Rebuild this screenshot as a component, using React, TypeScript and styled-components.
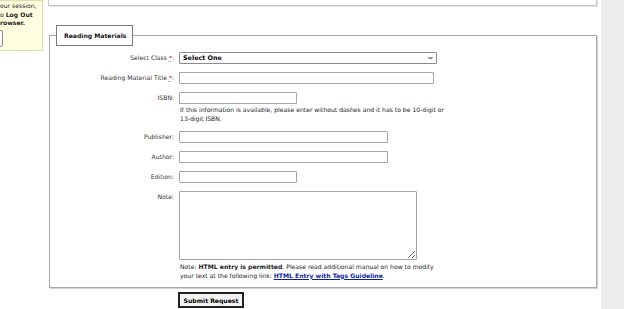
import * as React from "react";
import styled, { createGlobalStyle } from "styled-components";

const GlobalStyle = createGlobalStyle`
    html, body {
        margin: 0;
        padding: 0;
        background: #ffffff;
    }
    body {
        font-family: "DejaVu Sans", Tahoma, Verdana, sans-serif;
        font-size: 6.1px;
        color: #222;
        overflow: hidden;
    }
`;

const Page = styled.div`
    display: flex;
    width: 624px;
    height: 309px;
    overflow: hidden;
`;

const Sidebar = styled.div`
    width: 43px;
    flex: none;
    overflow: hidden;
`;

const InfoBox = styled.div`
    box-sizing: border-box;
    height: 51px;
    background: #ffffe1;
    border: 1px solid #e2dcaa;
    border-left: none;
    padding: 1px 0 0 0;
    line-height: 8.6px;
    white-space: nowrap;
`;

const InfoButton = styled.div`
    box-sizing: border-box;
    width: 20px;
    height: 17px;
    margin: 2px 0 0 -17px;
    border: 1px solid #8a8a8a;
    border-radius: 2px;
    background: #fff;
`;

const Main = styled.div`
    width: 549px;
    margin-left: 5px;
    flex: none;
`;

const TopPanel = styled.div`
    box-sizing: border-box;
    height: 36px;
    margin-top: -30px;
    border: 1px solid #c8c8c8;
    box-shadow: 1px 1px 0 #e4e4e4;
`;

const Fieldset = styled.fieldset`
    box-sizing: border-box;
    margin: 19px 0 0 1px;
    padding: 6px 0 7px 0;
    border: 1px solid #a8a8a8;
    box-shadow: 1px 1px 0 #d2d2d2;
`;

const Legend = styled.legend`
    margin-left: 6px;
    padding: 0 0 0 7px;
    box-sizing: border-box;
    width: 77px;
    height: 21px;
    border: 1px solid #7a7a7a;
    font-weight: bold;
    color: #111;
    text-align: left;
    line-height: 19px;
    white-space: nowrap;
`;

const FormGrid = styled.div`
    display: grid;
    grid-template-columns: 124px 1fr;
    column-gap: 5px;
    row-gap: 8px;
`;

const Label = styled.label`
    text-align: right;
    padding-top: 2px;
    line-height: 8px;
    color: #333;
    white-space: nowrap;
`;

const Required = styled.span`
    color: #d00;
    text-decoration: underline dotted #999;
`;

const Field = styled.div`
    position: relative;
    display: flex;
    flex-direction: column;
    align-items: flex-start;
`;

const TextInput = styled.input<{ $w: number }>`
    box-sizing: border-box;
    width: ${(p) => p.$w}px;
    height: 12px;
    margin: 0;
    padding: 0 2px;
    border: 1px solid #a4a4a4;
    border-radius: 1px;
    background: #fff;
    font: inherit;
`;

const Select = styled.select`
    box-sizing: border-box;
    appearance: none;
    width: 258px;
    height: 12px;
    margin: 0;
    padding: 0 0 0 3px;
    border: 1px solid #8c8c8c;
    border-radius: 1px;
    background: #fff;
    font-family: inherit;
    font-size: 6.4px;
    font-weight: bold;
    color: #000;
`;

const Chevron = styled.svg`
    position: absolute;
    left: 249px;
    top: 4px;
    width: 5px;
    height: 4px;
    pointer-events: none;
`;

const TextArea = styled.textarea`
    box-sizing: border-box;
    width: 238px;
    height: 69px;
    margin: 0;
    border: 1px solid #a4a4a4;
    border-radius: 1px;
    font: inherit;
`;

const Hint = styled.div<{ $w: number; $mt: number }>`
    width: ${(p) => p.$w}px;
    margin: ${(p) => p.$mt}px 0 0 1px;
    line-height: 8.6px;
    color: #222;
`;

const GuideLink = styled.a`
    color: #0a1ea0;
    font-weight: bold;
    text-decoration: underline;
`;

const Actions = styled.div`
    padding: 4px 0 0 130px;
`;

const SubmitButton = styled.button`
    box-sizing: border-box;
    width: 66px;
    height: 16px;
    padding: 0;
    border: 2px solid #222;
    background: #f3f3f3;
    font-family: inherit;
    font-size: 6.1px;
    font-weight: bold;
    color: #000;
`;

const Gutter = styled.div`
    width: 4px;
    flex: none;
`;

const RightColumn = styled.div`
    flex: 1;
    background: #ededed;
`;

const fields: { label: string; width: number }[] = [
    { label: "Publisher", width: 209 },
    { label: "Author", width: 209 },
    { label: "Edition", width: 118 },
];

export default function App() {
    return (
        <>
            <GlobalStyle />
            <Page>
                <Sidebar>
                    <InfoBox>
                        our session,
                        <br />o <b>Log Out</b>
                        <br />
                        <b>rowser.</b>
                        <InfoButton />
                    </InfoBox>
                </Sidebar>
                <Main>
                    <TopPanel />
                    <Fieldset>
                        <Legend>Reading Materials</Legend>
                        <FormGrid>
                            <Label>
                                Select Class <Required>*</Required>:
                            </Label>
                            <Field>
                                <Select defaultValue="">
                                    <option value="">Select One</option>
                                </Select>
                                <Chevron viewBox="0 0 10 7">
                                    <path d="M1 1.5 L5 5.5 L9 1.5" fill="none" stroke="#111" strokeWidth="2" />
                                </Chevron>
                            </Field>

                            <Label>
                                Reading Material Title <Required>*</Required>:
                            </Label>
                            <Field>
                                <TextInput $w={255} />
                            </Field>

                            <Label>ISBN:</Label>
                            <Field>
                                <TextInput $w={118} />
                                <Hint $w={268} $mt={2}>
                                    If this information is available, please enter without dashes and it has to be
                                    10-digit or 13-digit ISBN.
                                </Hint>
                            </Field>

                            {fields.map((f) => (
                                <React.Fragment key={f.label}>
                                    <Label>{f.label}:</Label>
                                    <Field>
                                        <TextInput $w={f.width} />
                                    </Field>
                                </React.Fragment>
                            ))}

                            <Label>Note:</Label>
                            <Field>
                                <TextArea />
                                <Hint $w={262} $mt={3}>
                                    Note: <b>HTML entry is permitted</b>. Please read additional manual on how to
                                    modify your text at the following link:{" "}
                                    <GuideLink href="#">HTML Entry with Tags Guideline</GuideLink>.
                                </Hint>
                            </Field>
                        </FormGrid>
                    </Fieldset>
                    <Actions>
                        <SubmitButton type="button">Submit Request</SubmitButton>
                    </Actions>
                </Main>
                <Gutter />
                <RightColumn />
            </Page>
        </>
    );
}
